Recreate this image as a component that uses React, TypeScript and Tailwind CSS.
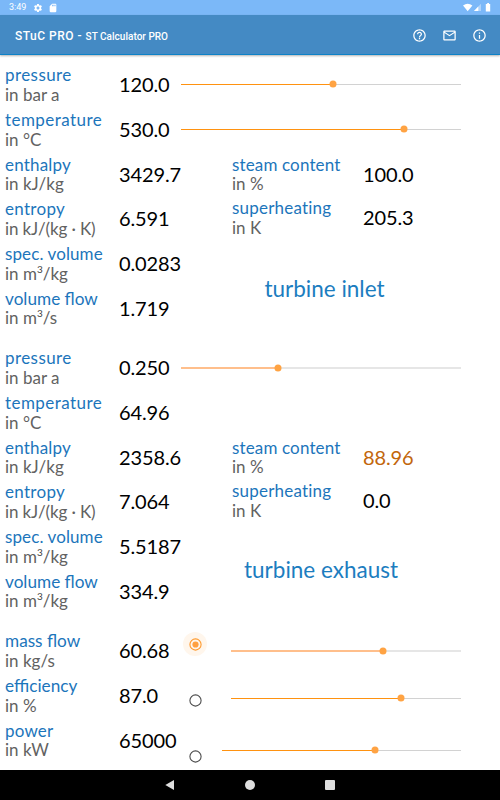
import type { ReactNode } from "react";
import clsx from "clsx";
import {
  MdHelpOutline,
  MdInfoOutline,
  MdMailOutline,
  MdSdCard,
  MdSettings,
} from "react-icons/md";

type Reading = {
  label: string;
  unit: ReactNode;
  value: string;
  spacing?: string;
  warn?: boolean;
};

const cubic = (suffix: string) => (
  <>
    in m
    <span className="relative -top-[7px] text-[10px] leading-none text-[#444]">3</span>
    {suffix}
  </>
);

const perKelvin = <span className="tracking-[-0.12px]">in kJ/(kg · K)</span>;

const inlet: Reading[] = [
  { label: "pressure", unit: "in bar a", value: "120.0", spacing: "tracking-[0.42px]" },
  { label: "temperature", unit: "in °C", value: "530.0", spacing: "tracking-[0.45px]" },
  { label: "enthalpy", unit: "in kJ/kg", value: "3429.7", spacing: "tracking-[0.2px]" },
  { label: "entropy", unit: perKelvin, value: "6.591", spacing: "tracking-[0.3px]" },
  { label: "spec. volume", unit: cubic("/kg"), value: "0.0283", spacing: "tracking-[0.1px]" },
  { label: "volume flow", unit: cubic("/s"), value: "1.719" },
];

const inletSteam: Reading[] = [
  { label: "steam content", unit: "in %", value: "100.0", spacing: "tracking-[0.14px]" },
  { label: "superheating", unit: "in K", value: "205.3", spacing: "tracking-[0.2px]" },
];

const exhaust: Reading[] = [
  { label: "pressure", unit: "in bar a", value: "0.250", spacing: "tracking-[0.42px]" },
  { label: "temperature", unit: "in °C", value: "64.96", spacing: "tracking-[0.45px]" },
  { label: "enthalpy", unit: "in kJ/kg", value: "2358.6", spacing: "tracking-[0.2px]" },
  { label: "entropy", unit: perKelvin, value: "7.064", spacing: "tracking-[0.3px]" },
  { label: "spec. volume", unit: cubic("/kg"), value: "5.5187", spacing: "tracking-[0.1px]" },
  { label: "volume flow", unit: cubic("/kg"), value: "334.9" },
];

const exhaustSteam: Reading[] = [
  { label: "steam content", unit: "in %", value: "88.96", spacing: "tracking-[0.14px]", warn: true },
  { label: "superheating", unit: "in K", value: "0.0", spacing: "tracking-[0.2px]" },
];

const machine: Reading[] = [
  { label: "mass flow", unit: "in kg/s", value: "60.68" },
  { label: "efficiency", unit: "in %", value: "87.0" },
  { label: "power", unit: "in kW", value: "65000", spacing: "tracking-[0.2px]" },
];

function Label({ label, unit, spacing }: Pick<Reading, "label" | "unit" | "spacing">) {
  return (
    <div className="text-[17px] leading-[19.5px] whitespace-nowrap">
      <p className={clsx("text-[#1c75bb]", spacing ?? "text-[17.2px]")}>{label}</p>
      <p className="text-[#626262]">{unit}</p>
    </div>
  );
}

function Value({ value, warn }: { value: string; warn?: boolean }) {
  return (
    <span
      className={clsx(
        "text-[20px] leading-[39px] tracking-[-0.12px]",
        warn ? "text-[#c2660c]" : "text-black"
      )}
    >
      {value}
    </span>
  );
}

function Readings({ items }: { items: Reading[] }) {
  return (
    <div className="w-[181px] shrink-0 pl-[5px]">
      {items.map((item) => (
        <div key={item.label} className="flex h-[44.65px]">
          <div className="w-[114px] shrink-0">
            <Label label={item.label} unit={item.unit} spacing={item.spacing} />
          </div>
          <Value value={item.value} />
        </div>
      ))}
    </div>
  );
}

function Steam({ items }: { items: Reading[] }) {
  return (
    <div className="pl-[51px]">
      {items.map((item) => (
        <div key={item.label} className="flex h-[43.5px]">
          <div className="w-[131px] shrink-0">
            <Label label={item.label} unit={item.unit} spacing={item.spacing} />
          </div>
          <Value value={item.value} warn={item.warn} />
        </div>
      ))}
    </div>
  );
}

function Slider({ percent, soft }: { percent: number; soft?: boolean }) {
  return (
    <div className="relative flex h-2 w-full items-center">
      <div
        className={soft ? "h-[2px] bg-[#ffbf8c]" : "h-px bg-[#ff9210]"}
        style={{ width: `${percent}%` }}
      />
      <div
        className={clsx("flex-1", soft ? "h-[2px] bg-[#e6e6e6]" : "h-px bg-[#d2d2d2]")}
      />
      <div
        className="absolute top-1/2 size-[7px] -translate-x-1/2 -translate-y-1/2 rounded-full bg-[#ffa343]"
        style={{ left: `${percent}%` }}
      />
    </div>
  );
}

function Radio({ checked }: { checked?: boolean }) {
  return (
    <div
      className={clsx(
        "flex size-6 items-center justify-center rounded-full",
        checked && "bg-[#fff6ec]"
      )}
    >
      <svg viewBox="0 0 13 13" className="size-[13px]" fill="none">
        <circle
          cx="6.5"
          cy="6.5"
          r="5.6"
          stroke={checked ? "#ff9a2e" : "#4d4d4d"}
          strokeWidth="1.1"
        />
        {checked && <circle cx="6.5" cy="6.5" r="3.1" fill="#ffa040" />}
      </svg>
    </div>
  );
}

export default function App() {
  return (
    <div
      className="flex h-[800px] w-[500px] flex-col overflow-hidden bg-white"
      style={{ fontFamily: 'Lato, "Open Sans", sans-serif' }}
    >
      {/* Status bar */}
      <div className="flex h-[15px] shrink-0 items-center bg-[#7bb8f8] pr-[9px] pl-[9px] font-[Roboto] text-[9px] text-white">
        <span className="w-[24px] pt-px">3:49</span>
        <MdSettings className="size-[10px]" />
        <MdSdCard className="ml-[5px] size-[10px]" />
        <svg viewBox="0 0 28 9" className="ml-auto h-[9px] w-[28px]" fill="#fff">
          <path d="M0 2.6Q4.7-1.2 9.4 2.6L4.7 8.2Z" />
          <path d="M18 .8V8h-7Z" fillOpacity=".4" />
          <path d="M15.3 3.6V8H11Z" />
          <path d="M24.2 0h1.8v1h1.2v7.6h-4.4V1h1.4Z" />
        </svg>
      </div>

      {/* App bar */}
      <header className="flex h-10 shrink-0 items-center border-b border-[#0d82c8] bg-[#448ac4] pr-[13px] pl-[15px] font-[Roboto] font-medium text-white shadow-[0_1px_2px_rgba(0,0,0,0.3)]">
        <h1 className="pt-[2px] text-[12px] tracking-[0.5px]">
          STuC PRO - <span className="text-[10px] tracking-[0.02px]">ST Calculator PRO</span>
        </h1>
        <div className="ml-auto flex gap-[15px] pt-px text-[15px]">
          <MdHelpOutline />
          <MdMailOutline />
          <MdInfoOutline />
        </div>
      </header>

      <main className="flex-1 pt-[10.45px]">
        {/* Turbine inlet */}
        <section className="flex h-[283px]">
          <Readings items={inlet} />
          <div className="w-[280px]">
            <div className="h-[44.5px] pt-[15px]">
              <Slider percent={54.3} />
            </div>
            <div className="h-[45px] pt-[15.5px]">
              <Slider percent={79.7} />
            </div>
            <Steam items={inletSteam} />
            <h2 className="mt-[33px] pl-[7px] text-center text-[22.5px] leading-7 text-[#1c7dbf]">
              turbine inlet
            </h2>
          </div>
        </section>

        {/* Turbine exhaust */}
        <section className="flex h-[283px]">
          <Readings items={exhaust} />
          <div className="w-[280px]">
            <div className="h-[89.5px] pt-[15.5px]">
              <Slider percent={34.6} soft />
            </div>
            <Steam items={exhaustSteam} />
            <h2 className="mt-[31px] text-center text-[22.5px] leading-7 text-[#1c7dbf]">
              turbine exhaust
            </h2>
          </div>
        </section>

        {/* Mass flow, efficiency, power */}
        <section className="flex">
          <Readings items={machine} />
          <div className="flex w-[280px]">
            <div className="flex w-[41px] shrink-0 flex-col gap-8 pt-px pl-[2px]">
              <Radio checked />
              <Radio />
              <Radio />
            </div>
            <div className="flex-1 pt-[15.5px]">
              <div className="h-[47.5px] pl-[9px]">
                <Slider percent={66} soft />
              </div>
              <div className="h-[52px] pl-[9px]">
                <Slider percent={74} />
              </div>
              <Slider percent={64} />
            </div>
          </div>
        </section>
      </main>

      {/* Navigation bar */}
      <nav className="flex h-[30px] shrink-0 items-center justify-center gap-[70px] bg-black">
        <svg viewBox="0 0 10 10" className="size-[10px]" fill="#dedede">
          <path d="M.3 5 9 0v10Z" />
        </svg>
        <div className="size-[9.5px] rounded-full bg-[#dedede]" />
        <div className="size-[10px] rounded-[1px] bg-[#dedede]" />
      </nav>
    </div>
  );
}
